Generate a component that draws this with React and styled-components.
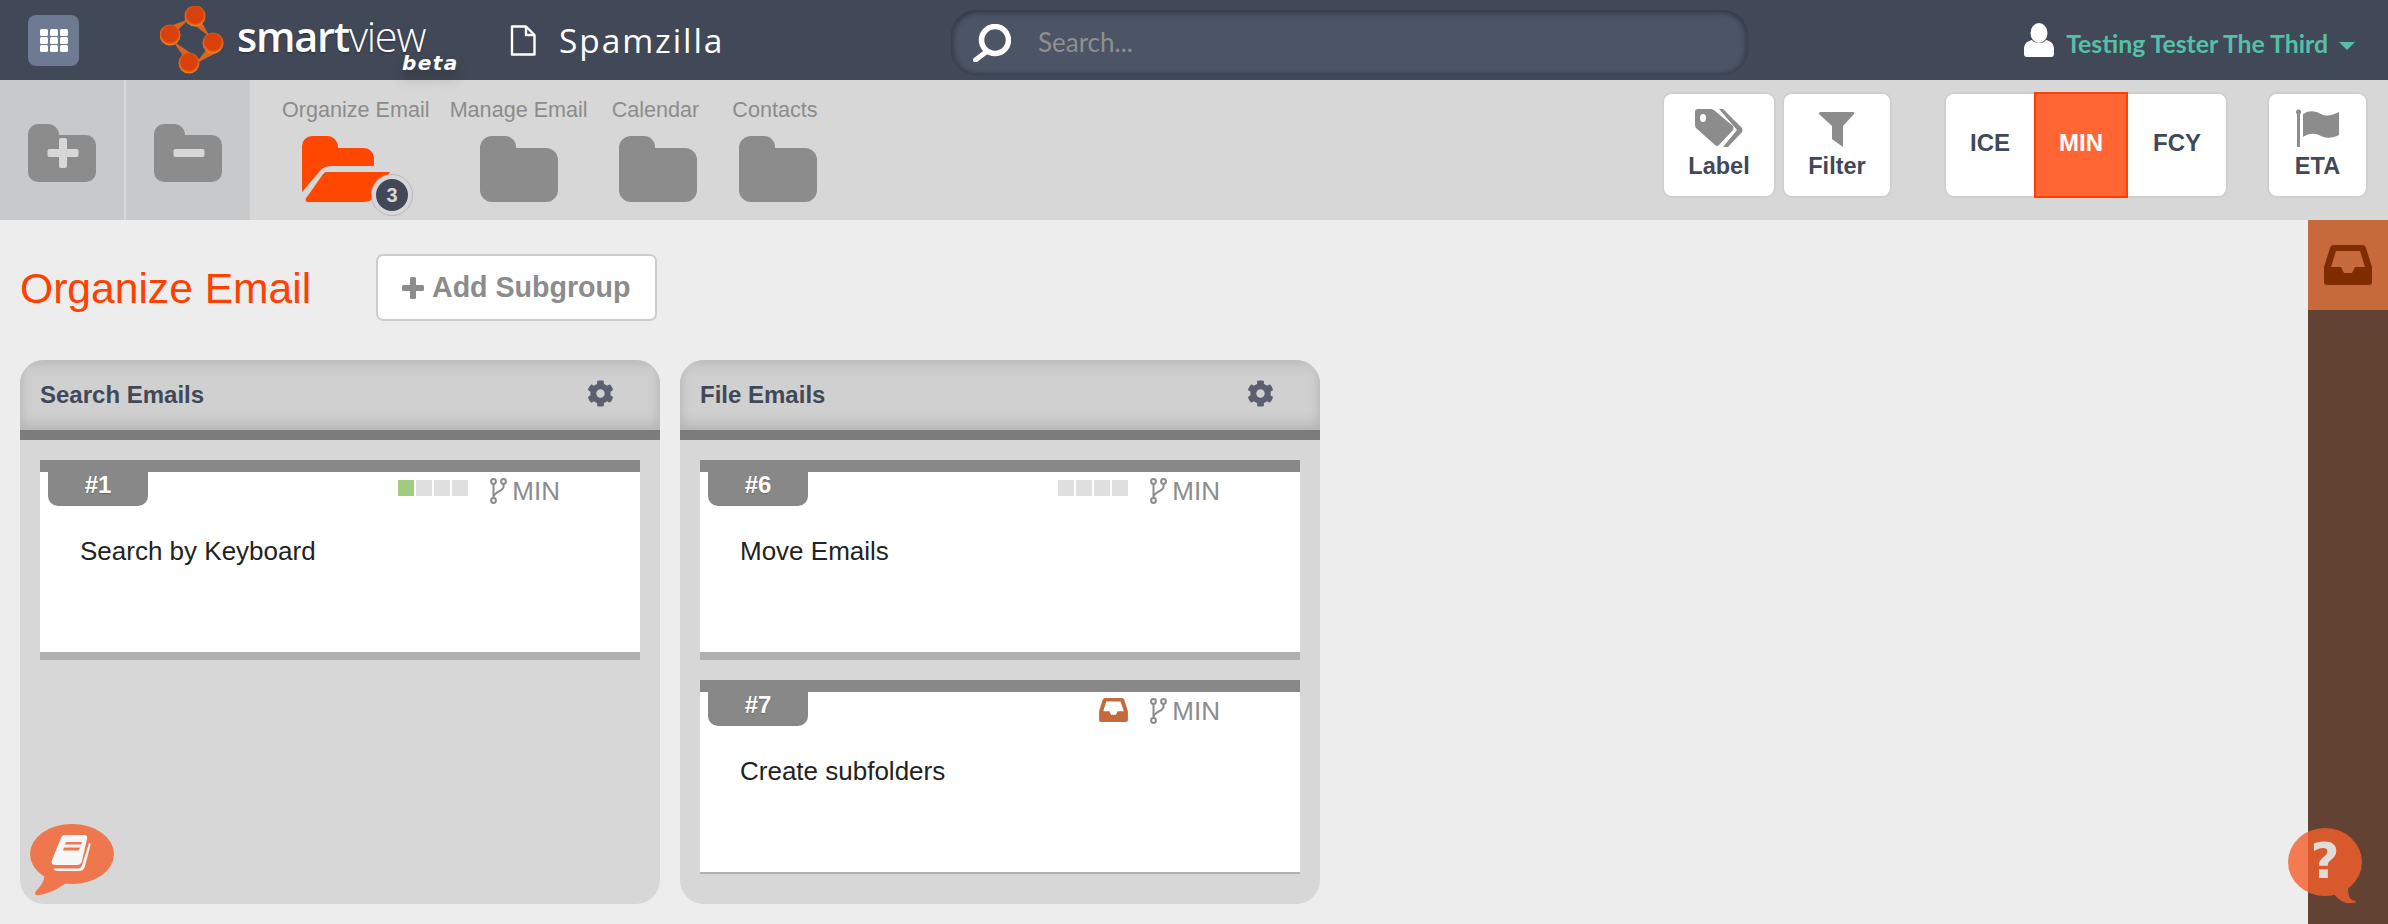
import React from 'react';
import styled, { createGlobalStyle } from 'styled-components';
import { FaCog } from 'react-icons/fa';

const Global = createGlobalStyle`
  html, body { margin: 0; padding: 0; background: #ededed; }
  * { box-sizing: border-box; }
  body { font-family: "Liberation Sans", Arial, sans-serif; }
`;

const Page = styled.div`
  position: relative;
  width: 2388px;
  height: 924px;
  overflow: hidden;
  display: flex;
  flex-direction: column;
`;

/* top bar */
const Header = styled.header`
  position: relative;
  z-index: 2;
  height: 80px;
  flex: none;
  background: #414857;
  display: flex;
  align-items: center;
  padding: 0 33px 0 28px;
`;
const GridButton = styled.div`
  width: 51px;
  height: 51px;
  flex: none;
  border-radius: 8px;
  background: #6d7a92;
  display: grid;
  grid-template-columns: repeat(3, 8px);
  grid-auto-rows: 7px;
  gap: 1px 2px;
  align-content: center;
  justify-content: center;
`;
const GridDot = styled.i`
  display: block;
  background: #fff;
  border-radius: 1.5px;
`;
const LogoBlock = styled.div`
  position: relative;
  width: 350px;
  margin-left: 81px;
  flex: none;
  display: flex;
  align-items: center;
  gap: 13px;
`;
const LogoText = styled.div`
  font-family: "Open Sans", sans-serif;
  font-size: 41.4px;
  line-height: 36px;
  letter-spacing: -1.2px;
  color: #fff;
  font-weight: 600;
  margin-top: -8px;
  text-shadow: 0 1px 2px rgba(0, 0, 0, 0.4);
  span { font-weight: 300; }
`;
const Beta = styled.div`
  position: absolute;
  left: 242px;
  top: 48px;
  font-family: "DejaVu Sans", sans-serif;
  font-style: italic;
  font-weight: 700;
  font-size: 20px;
  line-height: 18px;
  letter-spacing: 1.4px;
  color: #fff;
  text-shadow: 0 8px 14px rgba(0, 0, 0, 0.3);
`;
const ProjectBlock = styled.div`
  width: 441px;
  flex: none;
  display: flex;
  align-items: center;
  gap: 23px;
`;
const ProjectName = styled.div`
  font-family: "Open Sans", sans-serif;
  font-weight: 500;
  font-size: 33.5px;
  line-height: 40px;
  letter-spacing: 1.9px;
  color: #fff;
`;
const SearchBox = styled.div`
  width: 797px;
  height: 65px;
  margin-top: 5px;
  flex: none;
  border-radius: 26px;
  background: #4b5566;
  box-shadow: inset 0 3px 5px rgba(50, 55, 68, 0.7), inset 0 -1px 4px rgba(50, 55, 68, 0.45), inset 3px 0 5px rgba(50, 55, 68, 0.4), inset -3px 0 5px rgba(50, 55, 68, 0.4);
  display: flex;
  align-items: center;
  padding-left: 22px;
  gap: 27px;
`;
const SearchText = styled.div`
  font-family: Lato, sans-serif;
  font-size: 26px;
  color: #8f8f8f;
  margin-top: -2px;
`;
const UserMenu = styled.div`
  margin-left: auto;
  display: flex;
  align-items: center;
`;
const UserName = styled.div`
  font-family: Lato, sans-serif;
  font-weight: 700;
  font-size: 24.8px;
  color: #55c0a8;
  margin: 7px 11px 0 12px;
`;
const Caret = styled.div`
  width: 0;
  height: 0;
  margin-top: 12px;
  border-left: 8px solid transparent;
  border-right: 8px solid transparent;
  border-top: 8px solid #55c0a8;
`;

/* toolbar */
const Toolbar = styled.div`
  height: 140px;
  flex: none;
  background: #d7d7d7;
  display: flex;
  padding-right: 22px;
`;
const FolderAction = styled.div`
  width: ${p => p.$w}px;
  height: 100%;
  background: #c8c9cb;
  padding: 44px 0 0 28px;
  border-right: ${p => (p.$divider ? '2px solid #d7d7d7' : '0')};
`;
const Nav = styled.nav`
  display: flex;
  padding: 17px 0 0 32px;
`;
const NavItem = styled.div`
  display: flex;
  flex-direction: column;
  align-items: center;
  margin-left: ${p => p.$ml || 0}px;
  svg { margin-left: ${p => p.$nudge || 0}px; }
`;
const NavLabel = styled.div`
  font-size: 21.6px;
  line-height: 26px;
  color: #8c8c8c;
  margin-bottom: 13px;
  white-space: nowrap;
`;
const OpenFolderWrap = styled.div`
  position: relative;
  align-self: flex-start;
  margin-left: 20px;
  width: 88px;
  height: 66px;
`;
const Badge = styled.div`
  position: absolute;
  left: 70px;
  top: 39px;
  width: 40px;
  height: 40px;
  border-radius: 50%;
  background: #414857;
  border: 4px solid #d7d7d7;
  box-shadow: 0 0 0 1px #b9b9b9;
  color: #d7d7d7;
  font-weight: 700;
  font-size: 20px;
  display: flex;
  align-items: center;
  justify-content: center;
`;
const ToolGroup = styled.div`
  margin-left: auto;
  padding-top: 14px;
  display: flex;
  height: 116px;
`;
const ToolButton = styled.div`
  width: ${p => p.$w}px;
  height: 102px;
  margin-left: ${p => p.$ml || 0}px;
  background: #fff;
  border-radius: 8px;
  box-shadow: 0 0 0 2px #cfcfcf;
  display: flex;
  flex-direction: column;
  align-items: center;
  padding-top: 15px;
  color: #414857;
  font-weight: 700;
  font-size: 23.5px;
  line-height: 28px;
`;
const ToolIcon = styled.div`
  height: 38px;
  margin-bottom: 5px;
  display: flex;
  align-items: flex-end;
`;
const Segments = styled.div`
  display: flex;
  height: 102px;
  margin-left: ${p => p.$ml}px;
  border-radius: 8px;
  background: #fff;
  box-shadow: 0 0 0 2px #cfcfcf;
`;
const Segment = styled.div`
  width: ${p => p.$w}px;
  height: ${p => (p.$active ? 106 : 102)}px;
  margin-top: ${p => (p.$active ? -2 : 0)}px;
  padding-top: 35px;
  text-align: center;
  font-weight: 700;
  font-size: 24px;
  line-height: 28px;
  color: ${p => (p.$active ? '#fff' : '#414857')};
  background: ${p => (p.$active ? '#ff6633' : 'transparent')};
  border: ${p => (p.$active ? '2px solid #ff4000' : '0')};
`;

/* board */
const Main = styled.div`
  flex: 1;
  display: flex;
  min-height: 0;
`;
const Content = styled.main`
  flex: 1;
  padding: 34px 0 0 20px;
`;
const TitleRow = styled.div`
  display: flex;
  align-items: center;
  height: 67px;
`;
const Title = styled.h1`
  margin: 0;
  width: 356px;
  flex: none;
  font-weight: 400;
  font-size: 42.6px;
  line-height: 48px;
  color: #ff4000;
`;
const AddButton = styled.div`
  width: 281px;
  height: 67px;
  border: 2px solid #cccccc;
  border-radius: 7px;
  background: #fff;
  display: flex;
  align-items: center;
  padding-left: 24px;
  gap: 8px;
  color: #8c8c8c;
  font-weight: 700;
  font-size: 28.6px;
`;
const Columns = styled.div`
  display: flex;
  gap: 20px;
  margin-top: 39px;
`;
const Column = styled.section`
  width: 640px;
  height: 544px;
  border-radius: 24px;
  background: #d7d7d7;
  overflow: hidden;
`;
const ColumnHead = styled.div`
  height: 80px;
  border-bottom: 10px solid #7c7c7c;
  background: #d0d0d0;
  box-shadow: inset 0 8px 14px -4px #b8b8b8, inset 0 -14px 14px -8px #b4b4b4, inset 8px 0 12px -8px #b8b8b8, inset -8px 0 12px -8px #b8b8b8;
  display: flex;
  align-items: center;
  justify-content: space-between;
  padding: 0 46px 0 20px;
  color: #414857;
  font-weight: 700;
  font-size: 24px;
  svg { color: #5a6070; margin-top: -3px; }
`;
const CardList = styled.div`
  display: flex;
  flex-direction: column;
  gap: 20px;
  padding: 20px;
`;
const Card = styled.article`
  background: #fff;
  border-top: 12px solid #888888;
  border-bottom: ${p => p.$foot}px solid #b0b0b0;
  height: ${p => 192 + p.$foot}px;
`;
const CardTop = styled.div`
  display: flex;
  height: 34px;
  padding-right: 80px;
`;
const Tab = styled.div`
  width: 100px;
  height: 34px;
  margin-left: 8px;
  border-radius: 0 0 10px 10px;
  background: #888888;
  color: #fff;
  font-weight: 700;
  font-size: 24px;
  line-height: 26px;
  text-align: center;
  text-shadow: 0 1px 1px rgba(0, 0, 0, 0.25);
`;
const Meta = styled.div`
  margin-left: auto;
  display: flex;
  align-items: flex-start;
  padding-top: 6px;
`;
const Progress = styled.div`
  display: flex;
  gap: 2px;
  margin-top: 2px;
`;
const Cell = styled.i`
  display: block;
  width: 16px;
  height: 16px;
  background: ${p => (p.$on ? '#a0cc80' : '#dfdfdf')};
`;
const Effort = styled.div`
  display: flex;
  align-items: flex-start;
  gap: 5px;
  margin-left: 22px;
  font-size: 26px;
  line-height: 27px;
  color: #8c8c8c;
`;
const CardText = styled.div`
  margin: 29px 0 0 40px;
  font-size: 26px;
  line-height: 32px;
  color: #222;
`;

/* right rail */
const Rail = styled.aside`
  width: 80px;
  flex: none;
  background: #614233;
`;
const RailTab = styled.div`
  height: 90px;
  background: #c66a3c;
  display: flex;
  align-items: center;
  justify-content: center;
`;

/* floating helpers */
const BookBubble = styled.div`
  position: absolute;
  left: 30px;
  top: 824px;
  line-height: 0;
`;
const HelpBubble = styled.div`
  position: absolute;
  left: 2288px;
  top: 828px;
  width: 74px;
  height: 76px;
  line-height: 0;
  svg { opacity: 0.8; }
`;
const HelpMark = styled.span`
  position: absolute;
  left: 0;
  top: 33px;
  width: 74px;
  text-align: center;
  font-family: "DejaVu Sans", sans-serif;
  font-weight: 700;
  font-size: 50px;
  line-height: 0;
  color: #e0dcd8;
`;

const FOLDER_D = 'M12 0H25A11 11 0 0 1 36 11V12H66A12 12 0 0 1 78 24V54A12 12 0 0 1 66 66H12A12 12 0 0 1 0 54V12A12 12 0 0 1 12 0Z';

const Folder = () => (
  <svg width="78" height="66" viewBox="0 0 78 66"><path d={FOLDER_D} fill="#8c8c8c" /></svg>
);

const OpenFolder = () => (
  <svg width="88" height="66" viewBox="0 0 88 66">
    <path d="M10 0H25A11 11 0 0 1 36 11V12H62A10 10 0 0 1 72 22V30H31C25 30 21 31 18 35L0 56V10A10 10 0 0 1 10 0Z" fill="#ff4700" />
    <path d="M25 36H88L76 56C72 63 68 66 62 66H6C3 66 3 63 5 61L19 41C21 38 22 36 25 36Z" fill="#ff4700" />
  </svg>
);

const ActionFolder = ({ plus }) => (
  <svg width="68" height="58" viewBox="0 0 68 58">
    <path d="M10 0H20A11 11 0 0 1 31 11H58A10 10 0 0 1 68 21V48A10 10 0 0 1 58 58H10A10 10 0 0 1 0 48V10A10 10 0 0 1 10 0Z" fill="#8c8c8c" />
    <rect x="19.5" y="25" width="31" height="8" rx="2" fill="#d7d7d7" />
    {plus && <rect x="31" y="14" width="8" height="30" rx="2" fill="#d7d7d7" />}
  </svg>
);

const Logo = () => (
  <svg width="64" height="68" viewBox="0 0 64 68">
    <defs>
      <radialGradient id="node" cx="0.5" cy="0.45" r="0.55">
        <stop offset="0" stopColor="#d8420a" />
        <stop offset="0.7" stopColor="#d8420a" />
        <stop offset="1" stopColor="#f28a2a" />
      </radialGradient>
    </defs>
    <g fill="#d9651f">
      <path d="M29 15L41 15L50 31Z" />
      <path d="M5 22L16 26L29 13Z" />
      <path d="M47 43L58 46L35 58Z" />
      <path d="M23 50L35 50L13 35Z" />
    </g>
    <circle cx="35" cy="10" r="10.5" fill="url(#node)" />
    <circle cx="10" cy="29" r="10.5" fill="url(#node)" />
    <circle cx="53" cy="37" r="10.5" fill="url(#node)" />
    <circle cx="29" cy="57" r="10.5" fill="url(#node)" />
  </svg>
);

const DocIcon = () => (
  <svg width="26" height="31" viewBox="0 0 26 31" fill="none" stroke="#fff" strokeWidth="2.4" strokeLinejoin="round">
    <path d="M2 1.5H16L24.5 10V29.5H2Z" />
    <path d="M16 1.5V10H24.5" />
  </svg>
);

const SearchIcon = () => (
  <svg width="38" height="38" viewBox="0 0 38 38" fill="none" stroke="#fff" strokeLinecap="round">
    <circle cx="22" cy="16" r="13.5" strokeWidth="5.5" />
    <path d="M13 28L2.5 36" strokeWidth="5" />
  </svg>
);

const UserIcon = () => (
  <svg width="30" height="34" viewBox="0 0 30 34" fill="#fff">
    <ellipse cx="15" cy="10" rx="8.5" ry="10" />
    <path d="M8 17C10 21 20 21 22 17C27 18 30 21 30 26V31A3 3 0 0 1 27 34H3A3 3 0 0 1 0 31V26C0 21 3 18 8 17Z" />
  </svg>
);

const TagIcon = () => (
  <svg width="48" height="38" viewBox="0 0 48 38" fill="#8c8c8c">
    <path fillRule="evenodd" d="M3 0H16Q18 0 20 2L38 17Q39 19 38 21L24 36Q22 38 20 36L1 19Q0 18 0 15V3Q0 0 3 0ZM8 5A3 4 0 1 0 8 13A3 4 0 1 0 8 5Z" />
    <path d="M24 0H28L47 19Q48 21 47 23L33 38H28L42 21Z" />
  </svg>
);

const FilterIcon = () => (
  <svg width="36" height="35" viewBox="0 0 36 35" fill="#8c8c8c">
    <path d="M1 0H34Q36 0 35 2L24 14V35L13 27V14L0 2Q0 0 1 0Z" />
  </svg>
);

const FlagIcon = () => (
  <svg width="43" height="38" viewBox="0 0 43 38" fill="#8c8c8c">
    <circle cx="2.5" cy="3" r="2.5" />
    <rect x="1" y="3" width="3" height="35" />
    <path d="M7 5C14 1 19 2 25 5C31 8 37 6 43 3V26C37 29 31 30 25 27C19 24 13 24 7 28Z" />
  </svg>
);

const InboxIcon = ({ w, h, color }) => (
  <svg width={w} height={h} viewBox="0 0 48 40" fill={color}>
    <path fillRule="evenodd" d="M10 0H38Q41 0 42 3L48 22V37Q48 40 45 40H3Q0 40 0 37V22L6 3Q7 0 10 0ZM12 6L7 22H17L20 28H28L31 22H41L36 6Z" />
  </svg>
);

const BranchIcon = () => (
  <svg width="17" height="26" viewBox="0 0 17 26" fill="none" stroke="#8c8c8c" strokeWidth="2">
    <circle cx="3.5" cy="3.5" r="2.4" />
    <circle cx="13.5" cy="3.5" r="2.4" />
    <circle cx="3.5" cy="22.5" r="2.4" />
    <path d="M3.5 6V20M13.5 6V9C13.5 13 4 14 3.5 19" />
  </svg>
);

const PlusIcon = () => (
  <svg width="22" height="22" viewBox="0 0 22 22" fill="#8c8c8c">
    <rect x="8" y="0" width="6" height="22" rx="1.5" />
    <rect x="0" y="8" width="22" height="6" rx="1.5" />
  </svg>
);

const BookIcon = () => (
  <svg width="84" height="72" viewBox="0 0 84 72">
    <ellipse cx="42" cy="30" rx="42" ry="30" fill="#ef774d" />
    <path d="M15 50C14 58 10 63 6 67C4 70 6 72 9 71C18 70 28 65 36 59Z" fill="#ef774d" />
    <path d="M35 11H54Q58 11 57 15L52 37Q51 41 47 41H26Q20 41 22 36L31 14Q32 11 35 11Z" fill="#f7f7f7" />
    <path d="M36 18H52L51 20.5H35ZM34 23.5H50L49 26.5H33Z" fill="#ef774d" />
    <path d="M59 19Q61 19 60.5 21L55 42Q54 47 49 47H28Q24 47 23.5 44.5H48Q51 44.5 52 41Z" fill="#f7f7f7" />
  </svg>
);

const HelpShape = () => (
  <svg width="74" height="76" viewBox="0 0 74 76">
    <ellipse cx="37" cy="34" rx="37" ry="34" fill="#f65f2b" />
    <path d="M46 66C50 72 57 76 64 75C66 75 69 74 68 73C62 73 60 68 60 60Z" fill="#f65f2b" />
  </svg>
);

const Grid = () => (
  <GridButton>
    {Array.from({ length: 9 }).map((_, i) => <GridDot key={i} />)}
  </GridButton>
);

const TaskCard = ({ num, text, done, inbox, foot = 8 }) => (
  <Card $foot={foot}>
    <CardTop>
      <Tab>#{num}</Tab>
      <Meta>
        {inbox
          ? <InboxIcon w={29} h={24} color="#c66a3c" />
          : (
            <Progress>
              {[0, 1, 2, 3].map(i => <Cell key={i} $on={i < done} />)}
            </Progress>
          )}
        <Effort><BranchIcon />MIN</Effort>
      </Meta>
    </CardTop>
    <CardText>{text}</CardText>
  </Card>
);

export default function App() {
  return (
    <Page>
      <Global />
      <Header>
        <Grid />
        <LogoBlock>
          <Logo />
          <LogoText>smart<span>view</span></LogoText>
          <Beta>beta</Beta>
        </LogoBlock>
        <ProjectBlock>
          <DocIcon />
          <ProjectName>Spamzilla</ProjectName>
        </ProjectBlock>
        <SearchBox>
          <SearchIcon />
          <SearchText>Search...</SearchText>
        </SearchBox>
        <UserMenu>
          <UserIcon />
          <UserName>Testing Tester The Third</UserName>
          <Caret />
        </UserMenu>
      </Header>

      <Toolbar>
        <FolderAction $w={126} $divider><ActionFolder plus /></FolderAction>
        <FolderAction $w={124}><ActionFolder /></FolderAction>
        <Nav>
          <NavItem>
            <NavLabel>Organize Email</NavLabel>
            <OpenFolderWrap>
              <OpenFolder />
              <Badge>3</Badge>
            </OpenFolderWrap>
          </NavItem>
          <NavItem $ml={20}>
            <NavLabel>Manage Email</NavLabel>
            <Folder />
          </NavItem>
          <NavItem $ml={24} $nudge={6}>
            <NavLabel>Calendar</NavLabel>
            <Folder />
          </NavItem>
          <NavItem $ml={33} $nudge={6}>
            <NavLabel>Contacts</NavLabel>
            <Folder />
          </NavItem>
        </Nav>
        <ToolGroup>
          <ToolButton $w={110}><ToolIcon><TagIcon /></ToolIcon>Label</ToolButton>
          <ToolButton $w={106} $ml={10}><ToolIcon><FilterIcon /></ToolIcon>Filter</ToolButton>
          <Segments $ml={56}>
            <Segment $w={88}>ICE</Segment>
            <Segment $w={94} $active>MIN</Segment>
            <Segment $w={98}>FCY</Segment>
          </Segments>
          <ToolButton $w={97} $ml={43}><ToolIcon><FlagIcon /></ToolIcon>ETA</ToolButton>
        </ToolGroup>
      </Toolbar>

      <Main>
        <Content>
          <TitleRow>
            <Title>Organize Email</Title>
            <AddButton><PlusIcon />Add Subgroup</AddButton>
          </TitleRow>
          <Columns>
            <Column>
              <ColumnHead>Search Emails<FaCog size={27} /></ColumnHead>
              <CardList>
                <TaskCard num={1} text="Search by Keyboard" done={1} />
              </CardList>
            </Column>
            <Column>
              <ColumnHead>File Emails<FaCog size={27} /></ColumnHead>
              <CardList>
                <TaskCard num={6} text="Move Emails" done={0} />
                <TaskCard num={7} text="Create subfolders" inbox foot={2} />
              </CardList>
            </Column>
          </Columns>
        </Content>
        <Rail>
          <RailTab><InboxIcon w={48} h={40} color="#7f2c00" /></RailTab>
        </Rail>
      </Main>

      <BookBubble><BookIcon /></BookBubble>
      <HelpBubble>
        <HelpShape />
        <HelpMark>?</HelpMark>
      </HelpBubble>
    </Page>
  );
}
